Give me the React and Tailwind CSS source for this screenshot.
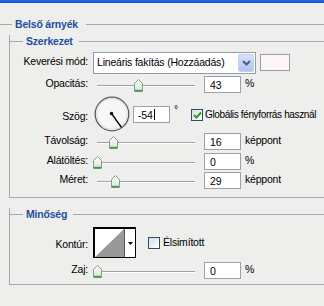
const Thumb = ({ left }) => (
  <svg className="absolute top-[4px]" style={{ left }} width="9" height="13" viewBox="0 0 9 13">
    <defs>
      <linearGradient id="thumbFill" x1="0" y1="0" x2="0" y2="1">
        <stop offset="0" stopColor="#ffffff" />
        <stop offset="1" stopColor="#d2e9d2" />
      </linearGradient>
    </defs>
    <path d="M0.5 4.5 L4.5 0.5 L8.5 4.5 V12.5 H0.5 Z" fill="url(#thumbFill)" stroke="#8b988b" />
    <path d="M1 11.6 H8" stroke="#3c9c4c" strokeWidth="1.6" />
  </svg>
);

const Slider = ({ thumb }) => (
  <div className="relative ml-[4px] w-[104px] h-[19px] shrink-0">
    <div className="mt-[10px] ml-[5px] w-[98px] h-[2px] border-t border-[#a2a2a2] bg-white" />
    <Thumb left={thumb} />
  </div>
);

const NumBox = ({ value }) => (
  <div className="ml-[8px] mt-[1px] w-[37px] h-[17px] shrink-0 bg-white border border-[#97a2ad] pl-[5px] pt-[2px] leading-[12px]">
    {value}
  </div>
);

const SliderRow = ({ label, thumb, value, unit, className }) => (
  <div className={`flex items-start h-[19px] ${className}`}>
    <span className="w-[78px] shrink-0 text-right mt-[2px] leading-[13px]">{label}</span>
    <Slider thumb={thumb} />
    <NumBox value={value} />
    <span className="ml-[4px] mt-[2px] leading-[13px]">{unit}</span>
  </div>
);

const Check = ({ checked }) => (
  <div className="w-[12px] h-[12px] shrink-0 border border-[#2b4f72] bg-linear-to-br from-[#d9dbe0] to-white flex items-center justify-center">
    {checked && (
      <svg width="9" height="8" viewBox="0 0 9 8">
        <path d="M1 4 L3.5 6.5 L8 1.5" stroke="#22a322" strokeWidth="2" fill="none" />
      </svg>
    )}
  </div>
);

const GroupTitle = ({ title, lead }) => (
  <div className="flex items-center h-[12px] -ml-px">
    <div className={`h-px ${lead} bg-[#a8a8a8]`} />
    <span className="pl-[3px] pr-[6px] font-bold text-[#1e4e9e] leading-[12px]">{title}</span>
    <div className="h-px flex-1 bg-[#a8a8a8]" />
  </div>
);

export default function App() {
  return (
    <div className="w-[324px] h-[306px] overflow-hidden bg-[#eeeeec] font-['Liberation_Sans',Arial,sans-serif] text-[10.5px] tracking-[-0.2px] text-black whitespace-nowrap">
      <div className="h-[3px] bg-linear-to-b from-[#2a6ae8] to-[#0f50d2]" />

      <div className="mt-[15px] flex items-center h-[12px]">
        <div className="h-px w-[12px] bg-[#a8a8a8]" />
        <span className="pl-[3px] pr-[8px] font-bold text-[#1e4e9e] leading-[12px]">Belső árnyék</span>
        <div className="h-px flex-1 bg-[#a8a8a8]" />
      </div>

      {/* Szerkezet */}
      <div className="ml-[9px] mt-[11px] border-l border-b border-[#a8a8a8] pb-[7px]">
        <div className="-mt-[6px]">
          <GroupTitle title="Szerkezet" lead="w-[14px]" />
        </div>

        <div className="flex items-start h-[22px] mt-[5px]">
          <span className="w-[78px] shrink-0 text-right mt-[3px] leading-[13px]">Keverési mód:</span>
          <div className="ml-[5px] w-[163px] h-[22px] shrink-0 bg-white border border-[#8f9eae] flex items-center">
            <span className="pl-[3px] flex-1">Lineáris fakítás (Hozzáadás)</span>
            <div className="w-[16px] h-[18px] mr-px rounded-[2px] bg-linear-to-b from-[#d6e1fb] to-[#b1c4f0] border border-[#c3d1f1] flex items-center justify-center">
              <svg width="9" height="6" viewBox="0 0 9 6">
                <path d="M1 1 L4.5 4.5 L8 1" stroke="#4a5c86" strokeWidth="2" fill="none" />
              </svg>
            </div>
          </div>
          <div className="ml-[4px] mt-[2px] w-[30px] h-[17px] bg-[#fcf6f6] border border-[#9c9c9c]" />
        </div>

        <SliderRow label="Opacitás:" thumb={41.5} value="43" unit="%" className="mt-[1px]" />

        <div className="flex items-center h-[36px] mt-[2px]">
          <span className="w-[78px] shrink-0 text-right leading-[13px] mt-[4px]">Szög:</span>
          <svg className="ml-[6px] shrink-0" width="36" height="36" viewBox="0 0 36 36">
            <circle cx="18" cy="18" r="16.8" fill="#f7f7f7" stroke="#55586a" strokeWidth="1.3" />
            <circle cx="18" cy="18" r="15.4" fill="none" stroke="#dcdcdc" strokeWidth="1" />
            <circle cx="17.5" cy="17.5" r="1.7" fill="#000" />
            <path d="M17.5 17.5 L27.5 31.5" stroke="#000" strokeWidth="1.3" />
          </svg>
          <div className="ml-[3px] w-[37px] h-[17px] shrink-0 bg-white border border-[#97a2ad] pl-[4px] pt-[2px] leading-[12px] flex items-start">
            <span>-54</span>
            <span className="inline-block w-px h-[11px] bg-black ml-px" />
          </div>
          <span className="ml-[4px] self-start mt-[8px] leading-[10px]">°</span>
          <div className="ml-[13px] mt-[1px]">
            <Check checked />
          </div>
          <span className="ml-[2px] leading-[13px] mt-[1px] text-[10px] tracking-[-0.35px]">Globális fényforrás használ</span>
        </div>

        <SliderRow label="Távolság:" thumb={17} value="16" unit="képpont" className="" />
        <SliderRow label="Alátöltés:" thumb={1} value="0" unit="%" className="mt-[1px]" />
        <SliderRow label="Méret:" thumb={18.5} value="29" unit="képpont" className="" />
      </div>

      {/* Minőség */}
      <div className="ml-[9px] mt-[16px] border-l border-b border-[#a8a8a8] pb-[4px]">
        <div className="-mt-[6px]">
          <GroupTitle title="Minőség" lead="w-[14px]" />
        </div>

        <div className="flex items-center h-[31px] mt-[7px]">
          <span className="w-[78px] shrink-0 text-right leading-[13px] mt-[3px]">Kontúr:</span>
          <div className="ml-[5px] w-[43px] h-[31px] shrink-0 flex border border-t-2 border-l-2 border-black bg-white">
            <svg width="29" height="28" viewBox="0 0 29 28" className="shrink-0">
              <polygon points="0,28 29,0 29,28" fill="#999999" />
            </svg>
            <div className="flex-1 border-l border-[#555] flex items-center justify-center">
              <svg width="5" height="3" viewBox="0 0 5 3">
                <polygon points="0,0 5,0 2.5,3" fill="#000" />
              </svg>
            </div>
          </div>
          <div className="ml-[12px]">
            <Check checked={false} />
          </div>
          <span className="ml-[3px] leading-[13px]">Élsimított</span>
        </div>

        <SliderRow label="Zaj:" thumb={1} value="0" unit="%" className="mt-[3px]" />
      </div>
    </div>
  );
}
